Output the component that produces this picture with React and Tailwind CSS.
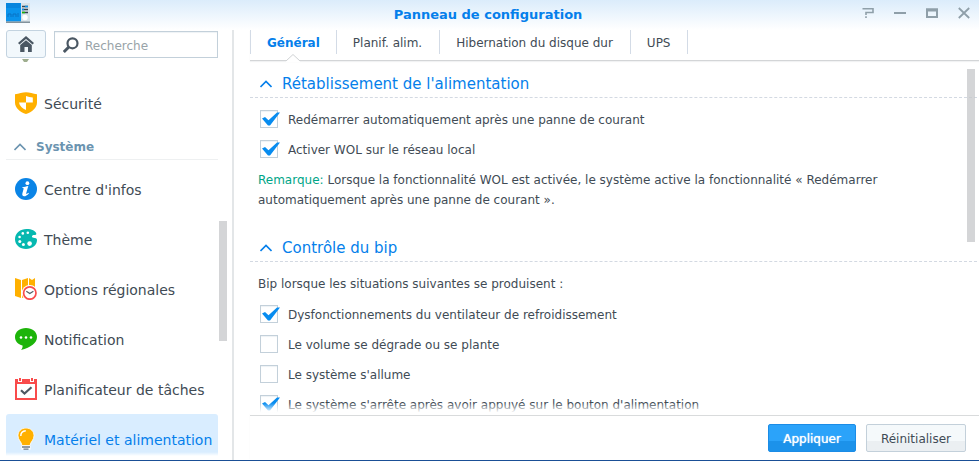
import { useState } from 'react'

function ShieldIcon() {
  return (
    <svg viewBox="0 0 22 22" className="size-[22px]" aria-hidden="true">
      <path d="M0 2.200C4 1.800 7.500 .2 11 .2s7 1.600 11 2v8.300C22 16 17 20 11 22 5 20 0 16 0 10.500z" fill="#ffb000" />
      <path d="M11 4v6.500h6.800v-5C15.500 5.300 13 4.800 11 4z" fill="#fff" />
      <path d="M4 10.500h7V18C7.500 16.500 4.500 14 4 10.500z" fill="#fff" />
    </svg>
  )
}

function InfoIcon() {
  return (
    <svg viewBox="0 0 22 22" className="size-[22px]" aria-hidden="true">
      <circle cx="11" cy="11" r="11" fill="#0a84e6" />
      <circle cx="12.400" cy="5.200" r="1.900" fill="#fff" />
      <path d="M7.500 9.200c2-.3 3.500-.9 5.800-1.300l-2.100 7.400c-.2.900.5.900 2.300-.5l.4.700c-1.700 1.900-3.400 2.800-4.800 2.800-1.700 0-2.100-1.400-1.700-3l1.300-4.700c.1-.5-.2-.6-1.500-.7z" fill="#fff" />
    </svg>
  )
}

function PaletteIcon() {
  return (
    <svg viewBox="0 0 22 22" className="size-[22px]" aria-hidden="true">
      <path d="M11.500 1C17 1 20.500 3 21.300 5.500c.3 1.300-.8 1.600-2.300 1.600-2.400.1-2.700 2.200-.8 2.600 1.700.3 3.800.2 3.800 2.300C22 17.500 17 21 11 21S0 17 0 11.300C0 5 5.500 1 11.500 1z" fill="#06b8b0" />
      <circle cx="12.800" cy="4.700" r="1.300" fill="#fff" />
      <circle cx="7.800" cy="5.400" r="1.300" fill="#fff" />
      <circle cx="4.600" cy="9" r="1.300" fill="#fff" />
      <circle cx="4.800" cy="13.400" r="1.500" fill="#fff" />
      <circle cx="8.400" cy="16.400" r="1.500" fill="#fff" />
      <circle cx="14.600" cy="15.600" r="2.300" fill="#fff" />
    </svg>
  )
}

function RegionIcon() {
  return (
    <svg viewBox="0 0 22 22" className="size-[22px]" aria-hidden="true">
      <path d="M0 0l6 2v18l-6-2zM7 2l6-2v18l-6 2zM14 0l3 2 3-2v18h-6z" fill="#ffb000" />
      <circle cx="14.800" cy="15" r="8" fill="#fff" />
      <circle cx="14.800" cy="15" r="6.200" fill="#fff" stroke="#f94b4b" strokeWidth="1.700" />
      <path d="M11.300 13.200l3.500 2.300 3.600-2.300" fill="none" stroke="#555f68" strokeWidth="1.200" />
    </svg>
  )
}

function ChatIcon() {
  return (
    <svg viewBox="0 0 22 22" className="size-[22px]" aria-hidden="true">
      <path d="M11 0c6.200 0 11 3.800 11 9 0 6-6 10.500-16 13 1.300-1.500 1.800-3 1.500-4.500C3 16.500 0 13.300 0 9c0-5.200 4.800-9 11-9z" fill="#1db40a" />
      <circle cx="6" cy="9.500" r="1.300" fill="#fff" />
      <circle cx="11" cy="9.500" r="1.300" fill="#fff" />
      <circle cx="16" cy="9.500" r="1.300" fill="#fff" />
    </svg>
  )
}

function CalendarIcon() {
  return (
    <svg viewBox="0 0 22 22" className="size-[22px]" aria-hidden="true">
      <path d="M0 1h22v21H0z" fill="#f94b4b" />
      <path d="M2 6h18v14H2z" fill="#fff" />
      <path d="M3 0h4v4H3zM15 0h4v4h-4z" fill="#fff" />
      <path d="M4 0h2v3H4zM16 0h2v3h-2z" fill="#f94b4b" />
      <path d="M6 12.200l3.500 3.300L16.500 9.300" fill="none" stroke="#4d5963" strokeWidth="2.200" />
    </svg>
  )
}

function BulbIcon() {
  return (
    <svg viewBox="0 0 22 22" className="size-[22px]" aria-hidden="true">
      <path d="M11 0c4.700 0 8 3.300 8 7.600 0 4.500-3.400 6-4 9.900H7c-.6-3.900-4-5.400-4-9.900C3 3.300 6.300 0 11 0z" fill="#ffb000" stroke="#fff" strokeWidth=".8" />
      <path d="M5.800 8c0-3 2-5 5-5.200" fill="none" stroke="#fff" strokeWidth="1.500" />
      <path d="M6.500 18v3.500h9V18z" fill="#fff" />
      <path d="M7 19h8M8.500 21.200h5" stroke="#6e7a84" strokeWidth="1.300" />
    </svg>
  )
}

function AppLogo() {
  return (
    <svg viewBox="0 0 24 20" className="h-5 w-6" aria-hidden="true">
      <path d="M0 0h24v19.500H0z" fill="#d8e2e8" />
      <path d="M0 0h15v18.500H0z" fill="#0a93ec" />
      <path d="M0 0h14v5H0z" fill="#0785de" />
      <path d="M2 14v-3h3v3M7 14v-3h3v3M12 14v-4" fill="none" stroke="#0872c4" />
      <path d="M0 18.500h24V20H0z" fill="#83929c" />
      <path d="M16 3.500h6M16 6.500h6M16 9.500h6" stroke="#34434f" strokeWidth="1.500" />
      <path d="M16 9.500h3" stroke="#1db40a" strokeWidth="1.500" />
      <path d="M19 3.500h3M16 6.500h2" stroke="#0a93ec" strokeWidth="1.500" />
      <circle cx="19" cy="14.500" r="2.700" fill="#fff" />
    </svg>
  )
}

function Chevron() {
  return (
    <svg viewBox="0 0 12 8" className="h-2 w-3" fill="none" stroke="currentColor" strokeWidth="1.600" aria-hidden="true">
      <path d="M.5 7L6 1.500 11.500 7" />
    </svg>
  )
}

const navItems = [
  { label: "Centre d'infos", Icon: InfoIcon },
  { label: 'Thème', Icon: PaletteIcon },
  { label: 'Options régionales', Icon: RegionIcon },
  { label: 'Notification', Icon: ChatIcon },
  { label: 'Planificateur de tâches', Icon: CalendarIcon },
  { label: 'Matériel et alimentation', Icon: BulbIcon, active: true },
]

const tabs = ['Général', 'Planif. alim.', 'Hibernation du disque dur', 'UPS']

function NavItem({ label, Icon, active }) {
  return (
    <a
      href="#"
      className={`flex h-[50px] shrink-0 items-center gap-[7px] rounded-[3px] pl-[9px] text-sm whitespace-nowrap ${active ? 'bg-[#d9edff] text-[#057feb]' : 'text-[#414b55]'}`}
    >
      <Icon />
      <span className="pt-[2px]">{label}</span>
    </a>
  )
}

function Check({ label, defaultChecked }) {
  return (
    <label className="flex h-[30px] items-center gap-[10px] pl-[10px]">
      <span className="relative size-[18px] shrink-0">
        <input
          type="checkbox"
          defaultChecked={defaultChecked}
          className="peer block size-[18px] appearance-none border border-[#c3d0da] bg-white shadow-[inset_0_1px_1px_#eef2f5]"
        />
        <svg viewBox="0 0 20 18" className="pointer-events-none absolute top-0 left-0 hidden h-[18px] w-5 peer-checked:block" aria-hidden="true">
          <path d="M2 8.500l3-1.500L8.500 10.200 17 2.500h3L10 15.500H8z" fill="#078cf0" />
        </svg>
      </span>
      <span className="pt-[2px]">{label}</span>
    </label>
  )
}

function Section({ title, children }) {
  return (
    <section>
      <h2 className="flex h-7 items-center border-b border-dashed border-[#d3d9e2] text-[#057feb]">
        <button type="button" className="flex items-center gap-[10px] pt-[2px] pl-[10px] text-[15px]">
          <Chevron />
          {title}
        </button>
      </h2>
      {children}
    </section>
  )
}

export default function App() {
  const [tab, setTab] = useState('Général')

  return (
    <div className="flex h-screen flex-col overflow-hidden border-b border-[#1a4f96] bg-white font-['Verdana','DejaVu_Sans',sans-serif] text-xs text-[#414b55]">
      <header className="flex h-[30px] shrink-0 items-start justify-between bg-linear-to-b from-[#dbecfb] to-white pt-[3px] pr-[9px] pl-[6px]">
        <div className="flex flex-1">
          <AppLogo />
        </div>
        <h1 className="pt-[2px] text-[13px] leading-5 font-bold text-[#057feb]">Panneau de configuration</h1>
        <div className="flex flex-1 justify-end gap-5 pt-1 text-[#8f9fa9]">
          <button type="button" aria-label="Aide">
            <svg viewBox="0 0 12 12" className="size-3" fill="none" stroke="currentColor" strokeWidth="1.600">
              <path d="M.5 1.800h10.500v3.700H4V8M4 9.300V11" />
            </svg>
          </button>
          <button type="button" aria-label="Réduire">
            <svg viewBox="0 0 12 12" className="size-3" fill="none" stroke="currentColor" strokeWidth="2">
              <path d="M0 6h12" />
            </svg>
          </button>
          <button type="button" aria-label="Agrandir">
            <svg viewBox="0 0 12 12" className="size-3" fill="none" stroke="currentColor">
              <path d="M1 2.500h10v7.500H1z" strokeWidth="2" />
              <path d="M0 3h12" strokeWidth="3" />
            </svg>
          </button>
          <button type="button" aria-label="Fermer">
            <svg viewBox="0 0 12 12" className="size-3" fill="none" stroke="currentColor" strokeWidth="1.800">
              <path d="M.8 1l10.400 10M11.200 1L.8 11" />
            </svg>
          </button>
        </div>
      </header>

      <div className="flex min-h-0 flex-1">
        <aside className="flex w-[234px] shrink-0 flex-col border-r-2 border-[#e3e6e8]">
          <div className="flex h-7 shrink-0 gap-2 pr-[14px] pl-[6px]">
            <button type="button" aria-label="Accueil" className="flex w-10 items-center justify-center rounded-[3px] border border-[#c3d3e0] bg-[#f2f8fc] text-[#4a5763]">
              <svg viewBox="0 0 16 16" className="size-4" fill="currentColor" aria-hidden="true">
                <path d="M8 0l8 7-1.500 1.500L8 3 1.500 8.500 0 7z" />
                <path d="M8 4.300l5.800 4.800V16H10v-5H6.500v5H2.200V9.100z" />
              </svg>
            </button>
            <label className="mt-px flex min-w-0 flex-1 items-center gap-[6px] border border-[#c3d0da] pl-2 shadow-[inset_0_1px_1px_#eef2f5]">
              <svg viewBox="0 0 16 16" className="size-4 shrink-0" fill="none" stroke="#4a5763" aria-hidden="true">
                <circle cx="9.500" cy="6.300" r="5" strokeWidth="2.200" />
                <path d="M5.800 10L.8 15" strokeWidth="3" />
              </svg>
              <input type="search" aria-label="Recherche" placeholder="Recherche" className="w-full min-w-0 bg-transparent pt-[2px] text-xs outline-none placeholder:text-[#98a3a8]" />
            </label>
          </div>

          <div className="relative mb-1 flex min-h-0 flex-1">
            <nav className="flex min-w-0 flex-1 flex-col overflow-hidden pr-[14px] pl-[6px]">
              <svg viewBox="0 0 8 4" className="ml-4 h-1 w-2 shrink-0" aria-hidden="true">
                <path d="M0 1h7L5 4H2z" fill="#9fae8f" />
              </svg>
              <div className="flex shrink-0 flex-col pt-4">
                <NavItem label="Sécurité" Icon={ShieldIcon} />
                <button type="button" className="mb-1 flex h-8 items-center gap-[10px] border-b border-[#eef0f1] pt-[6px] pl-2 font-bold text-[#6b94b0]">
                  <Chevron />
                  Système
                </button>
                {navItems.map(item => <NavItem key={item.label} {...item} />)}
              </div>
            </nav>
            <div className="absolute inset-x-0 bottom-0 h-1 bg-linear-to-b from-transparent to-white" />
            <div className="absolute top-[41%] right-[5px] h-[30%] w-2 bg-[#d4d5d7]" />
          </div>
        </aside>

        <main className="flex min-w-0 flex-1 flex-col pl-4">
          <div role="tablist" className="flex h-[31px] shrink-0 items-start border-b border-[#d3d5d7] shadow-[0_1px_1px_#f1f2f3]">
            {tabs.map(name => (
              <button
                key={name}
                type="button"
                role="tab"
                aria-selected={tab === name}
                onClick={() => setTab(name)}
                className={`relative h-6 border-r border-[#d3dbe6] pt-[2px] first:border-l ${tab === name ? 'px-4 font-bold text-[#057feb]' : 'pr-[17px] pl-4'}`}
              >
                {name}
                {tab === name && (
                  <svg viewBox="0 0 14 8" className="absolute top-6 left-1/2 h-2 w-[14px] -translate-x-1/2" aria-hidden="true">
                    <path d="M0 7l7-6.500L14 7v1H0z" fill="#fff" />
                    <path d="M0 7l7-6.500L14 7" fill="none" stroke="#cfd2d4" />
                  </svg>
                )}
              </button>
            ))}
          </div>

          <div className="relative min-h-0 flex-1 overflow-hidden pt-[9px] pr-[2px]">
            <Section title="Rétablissement de l'alimentation">
              <div className="pt-[6px] pb-6">
                <Check label="Redémarrer automatiquement après une panne de courant" defaultChecked />
                <Check label="Activer WOL sur le réseau local" defaultChecked />
                <p className="max-w-[660px] pt-[6px] pl-2 leading-5">
                  <span className="text-[#00a587]">Remarque:</span> Lorsque la fonctionnalité WOL est activée, le système active la fonctionnalité « Redémarrer automatiquement après une panne de courant ».
                </p>
              </div>
            </Section>
            <Section title="Contrôle du bip">
              <p className="pt-3 pb-[5px] pl-2 leading-5">Bip lorsque les situations suivantes se produisent :</p>
              <Check label="Dysfonctionnements du ventilateur de refroidissement" defaultChecked />
              <Check label="Le volume se dégrade ou se plante" />
              <Check label="Le système s'allume" />
              <Check label="Le système s'arrête après avoir appuyé sur le bouton d'alimentation" defaultChecked />
            </Section>
            <div className="absolute inset-x-0 bottom-0 h-3 bg-linear-to-b from-transparent to-white to-80%" />
            <div className="absolute top-2 right-1 h-[49%] w-2 bg-[#c5c7ca]/75" />
          </div>

          <footer className="flex h-[45px] shrink-0 items-start justify-end gap-[10px] border-t border-[#d9dbdc] pt-2 pr-[13px] shadow-[0_-1px_1px_#f1f2f3]">
            <button type="button" className="h-7 rounded-[2px] border border-[#1b8ce6] bg-linear-to-b from-[#2ba3fa] from-62% to-[#1c92ea] to-62% px-[14px] pt-px text-white text-shadow-[0_0_1px_#fff]">
              Appliquer
            </button>
            <button type="button" className="h-7 rounded-[2px] border border-[#c3d0da] bg-linear-to-b from-[#f5f9fb] from-62% to-[#ebeff2] to-62% px-[14px] pt-px">
              Réinitialiser
            </button>
          </footer>
        </main>
      </div>
    </div>
  )
}
